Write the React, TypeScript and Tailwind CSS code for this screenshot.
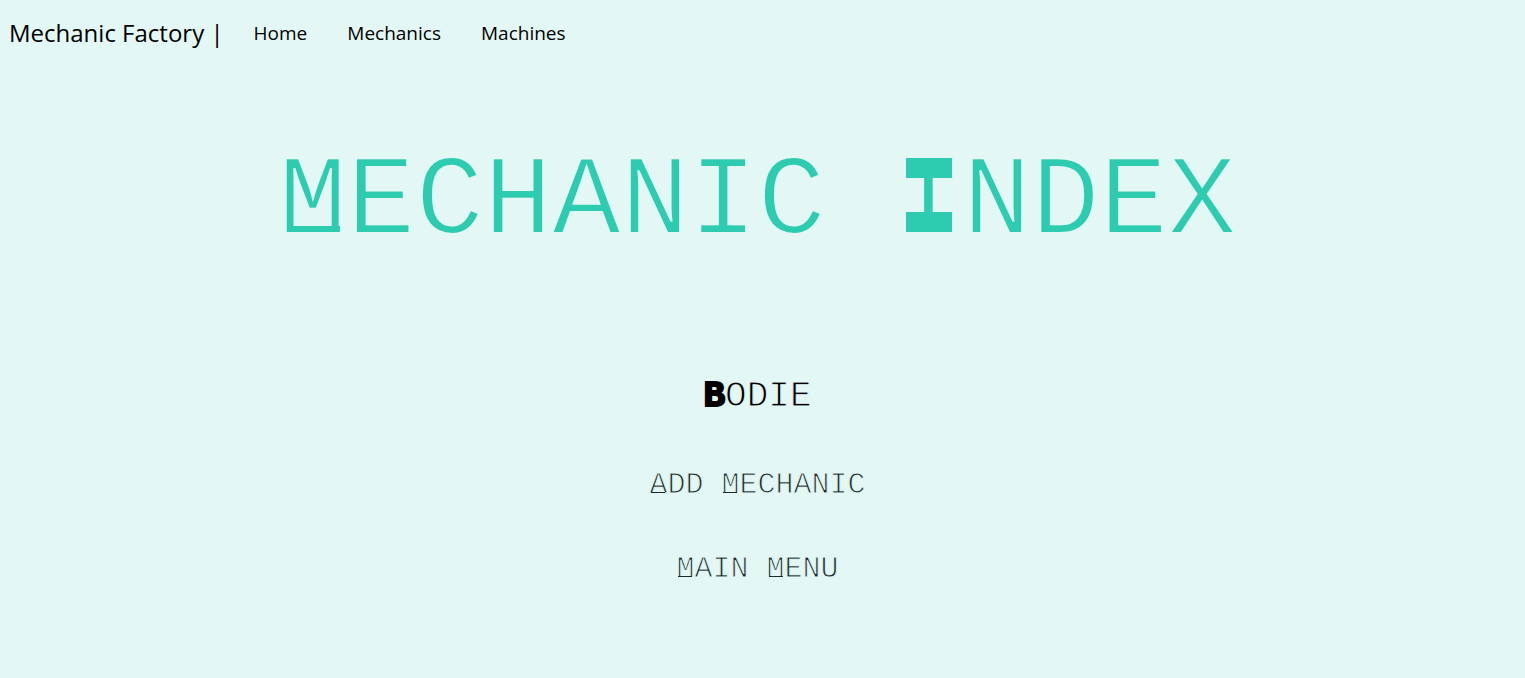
import React from "react";

const navLinks = ["Home", "Mechanics", "Machines"];

// Capital closed off by a rule along its baseline.
function ClosedCap({ children }: { children: string }) {
  return (
    <span className="relative after:absolute after:bottom-[9px] after:left-[2px] after:h-px after:w-3.5 after:bg-current">
      {children}
    </span>
  );
}

const menuLink =
  "text-[30px] leading-10 text-[#1c2b29] [-webkit-text-stroke:1px_#e3f8f5]";

export default function App() {
  return (
    <div className="min-h-screen bg-[#e3f8f5] text-black">
      <nav className="flex items-center gap-[30px] px-[9px] pt-[13px] font-['Open_Sans','Noto_Sans',sans-serif]">
        <a href="#" className="text-2xl leading-10">Mechanic Factory |</a>
        <div className="flex gap-10 text-[19px] leading-10">
          {navLinks.map((label) => (
            <a key={label} href="#">{label}</a>
          ))}
        </div>
      </nav>
      <main className="flex flex-col items-center pr-2.5 pb-8 text-center font-['Liberation_Mono',monospace] uppercase">
        <h1 className="mt-20 text-[114px] leading-[140px] text-[#2dcbb0] [-webkit-text-stroke:2px_#e3f8f5]">
          <span className="relative after:absolute after:bottom-[35px] after:left-[9px] after:h-[6px] after:w-[52px] after:bg-current">M</span>
          echanic{" "}
          <span className="relative before:absolute before:top-[20px] before:left-[12px] before:h-[20px] before:w-[46px] before:bg-current after:absolute after:bottom-[35px] after:left-[12px] after:h-[20px] after:w-[46px] after:bg-current">I</span>
          ndex
        </h1>
        <a href="#" className="mt-26 text-4xl leading-10 [-webkit-text-stroke:1px_#e3f8f5]">
          <span className="font-bold [-webkit-text-stroke:2px_black]">B</span>odie
        </a>
        <a href="#" className={"mt-12 " + menuLink}>
          <ClosedCap>A</ClosedCap>dd <ClosedCap>M</ClosedCap>echanic
        </a>
        <a href="#" className={"mt-11 " + menuLink}>
          <ClosedCap>M</ClosedCap>ain <ClosedCap>M</ClosedCap>enu
        </a>
      </main>
    </div>
  );
}
